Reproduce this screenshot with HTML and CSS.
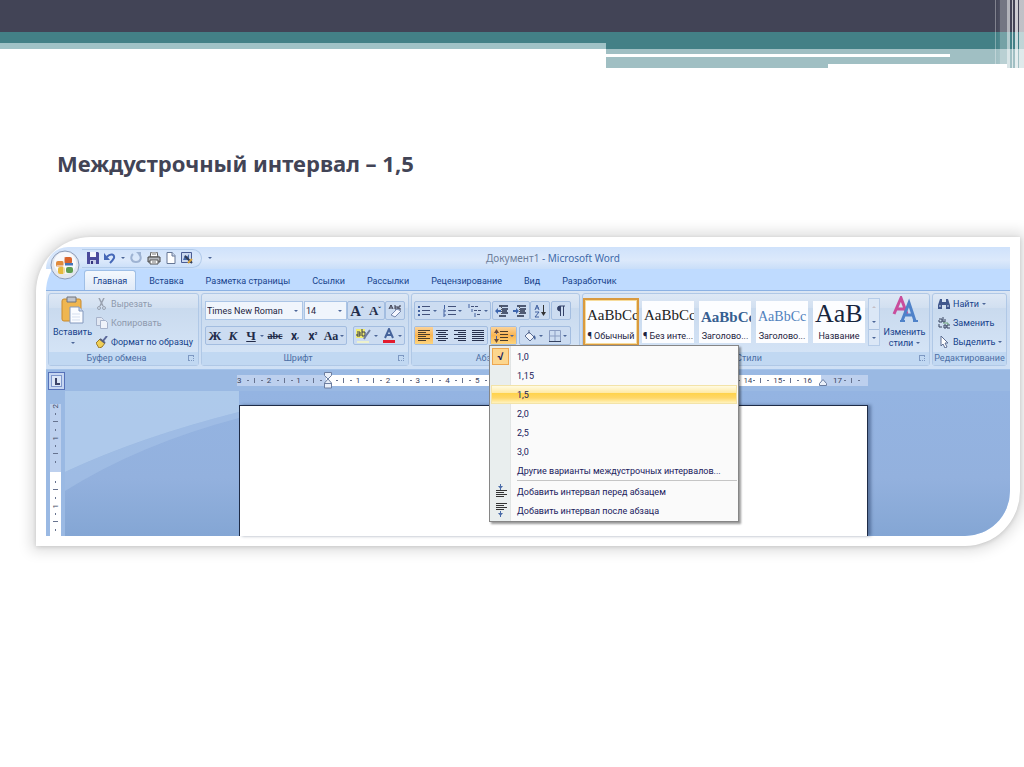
FILE: index.html
```
<!DOCTYPE html>
<html lang="ru">
<head>
  <meta charset="UTF-8" />
  <meta name="viewport" content="width=device-width, initial-scale=1.0" />
  <title>Междустрочный интервал</title>
  <link rel="stylesheet" href="styles.css">
</head>
<body>

  <header class="slide-top">
    <div class="bar-dark"></div>
    <div class="bar-split">
      <div class="split-left"></div>
      <div class="split-right">
        <div class="line-white"></div>
        <div class="line-bottom"></div>
      </div>
    </div>
    <div class="stripes"></div>
  </header>

  <main>
    <h1>Междустрочный интервал – 1,5</h1>

    <div class="frame">
      <div class="word">

        <div class="titlebar">
          <button class="office" aria-label="Office">
            <svg width="30" height="30" viewBox="0 0 30 30">
              <circle cx="15" cy="15" r="14" fill="#e3e7ef" stroke="#8c9cb8"/>
              <circle cx="15" cy="13" r="11" fill="#f8f9fc"/>
              <rect x="6" y="11" width="8" height="6" rx="2" fill="#e08a3c"/>
              <rect x="14" y="7" width="8" height="7" rx="2" fill="#d9642c"/>
              <rect x="8" y="17" width="7" height="7" rx="2" fill="#e7b93d"/>
              <rect x="16" y="17" width="7" height="6" rx="2" fill="#5f9e52"/>
              <path d="M15 13h8v3h-8z" fill="#4574b8"/>
              <path d="M14 8v16M7 16h16" stroke="#f8f9fc"/>
            </svg>
          </button>
          <div class="quick">
            <button aria-label="Сохранить"><svg width="12" height="12" viewBox="0 0 12 12"><path d="M0 0h11l1 1v11H0z" fill="#4a4a9c"/><path d="M3 0h6v5H3z" fill="#f4f6fc"/><path d="M3 8h6v4H3z" fill="#c7cce8"/><path d="M4 9h2v3H4z" fill="#33337d"/></svg></button>
            <button aria-label="Отменить"><svg width="12" height="12" viewBox="0 0 12 12"><path d="M3 5c3-4 8-3 7 1-1 2-2 3-4 5" fill="none" stroke="#4668b8" stroke-width="2"/><path d="M0 1v7h6z" fill="#4668b8"/></svg></button>
            <i class="arrow"></i>
            <button aria-label="Повторить"><svg width="12" height="12" viewBox="0 0 12 12"><path d="M3 2C0 5 1 10 6 10s6-5 3-8" fill="none" stroke="#9eb3d3" stroke-width="2"/><path d="M6 0h5v5z" fill="#9eb3d3"/></svg></button>
            <button aria-label="Печать"><svg width="14" height="13" viewBox="0 0 14 13"><path d="M4 0h6l1 5H3z" fill="#fff" stroke="#555"/><path d="M1 5h12v5H1z" fill="#b5b8bd" stroke="#444"/><path d="M3 8h8v4H3z" fill="#fff" stroke="#555"/><path d="M5 10h4M5 2h4" stroke="#777"/></svg></button>
            <button aria-label="Создать"><svg width="10" height="12" viewBox="0 0 10 12"><path d="M1 0.5h5l3 3v8H1z" fill="#fff" stroke="#667796"/><path d="M6 0v4h3" fill="#cdd8ea" stroke="#667796"/></svg></button>
            <button aria-label="Правка"><svg width="12" height="12" viewBox="0 0 12 12"><path d="M0.5 0.5h10v10H0.5z" fill="#cbd8ef" stroke="#4a5c94"/><path d="M2 8l2-5 2 2 2-3v6z" fill="#4568a8"/><path d="M4 4l7 7" stroke="#333c55" stroke-width="2"/><path d="M7 11l4-4" stroke="#d7a23b" stroke-width="2"/></svg></button>
          </div>
          <i class="arrow quick-more"></i>
          <div class="doc-title"><span>Документ1</span> - Microsoft Word</div>
        </div>

        <nav class="tabs">
          <a href="#" class="active">Главная</a>
          <a href="#">Вставка</a>
          <a href="#">Разметка страницы</a>
          <a href="#">Ссылки</a>
          <a href="#">Рассылки</a>
          <a href="#">Рецензирование</a>
          <a href="#">Вид</a>
          <a href="#">Разработчик</a>
        </nav>

        <div class="ribbon">

          <section class="group clipboard">
            <div class="group-body">
              <button class="big">
                <svg width="24" height="28" viewBox="0 0 24 28"><rect x="1" y="3" width="19" height="22" rx="2" fill="#efb650" stroke="#c98a2d"/><path d="M6 1h9v5H6z" fill="#c0c4cc" stroke="#71757d"/><path d="M9 11h9l4 4v12H9z" fill="#fafcff" stroke="#8499bd"/><path d="M18 11v4h4" fill="#c7d6ec" stroke="#8499bd"/><path d="M11 18h8M11 21h8M11 24h8" stroke="#d5dfef"/></svg>
                Вставить
                <i class="arrow"></i>
              </button>
              <div class="stack">
                <button class="off"><svg width="12" height="12" viewBox="0 0 12 12"><path d="M3 0l4 8M8 0L4 8" stroke="#9aa2b0" stroke-width="1.500"/><circle cx="3" cy="10" r="1.500" fill="none" stroke="#9aa2b0"/><circle cx="8" cy="10" r="1.500" fill="none" stroke="#9aa2b0"/></svg>Вырезать</button>
                <button class="off"><svg width="12" height="12" viewBox="0 0 12 12"><path d="M0.500 0.500h5l2 2v6h-7z" fill="#e1e7f2" stroke="#a7b3cb"/><path d="M4.500 3.500h5l2 2v6h-7z" fill="#eff3fa" stroke="#a7b3cb"/></svg>Копировать</button>
                <button><svg width="12" height="12" viewBox="0 0 12 12"><path d="M11 0L7 5" stroke="#59669a" stroke-width="2"/><path d="M4 3l5 4-3 4-3 1-3-5z" fill="#f0cf55" stroke="#98792c"/><path d="M4 3l5 4" stroke="#575e7c" stroke-width="2"/></svg>Формат по образцу</button>
              </div>
            </div>
            <h2>Буфер обмена<i class="launch"></i></h2>
          </section>

          <section class="group font">
            <div class="rows">
              <div class="row">
                <div class="combos">
                  <label class="combo face"><select aria-label="Шрифт"><option>Times New Roman</option></select><i class="arrow"></i></label>
                  <label class="combo size"><select aria-label="Размер шрифта"><option>14</option></select><i class="arrow"></i></label>
                </div>
                <div class="set"><button class="serif grow">A<sup>ˆ</sup></button><button class="serif shrink">A<sup>ˇ</sup></button></div>
                <div class="set"><button aria-label="Очистить формат"><svg width="14" height="14" viewBox="0 0 14 14"><path d="M1 5l2-4 2 4M2 4h2M7 1v4h3V3H7M13 2h-2v3h2" fill="none" stroke="#334"/><path d="M3 11l6-6 4 2-6 6z" fill="#f5f7ff" stroke="#7788ad"/></svg></button></div>
              </div>
              <div class="row">
                <div class="set styles-set">
                  <button class="serif">Ж</button><button class="serif italic">К</button><button class="serif under">Ч</button><i class="arrow"></i><button class="serif strike">abc</button><button class="script">x<sub>,</sub></button><button class="script">x<sup>²</sup></button><button class="serif case">Aa</button><i class="arrow"></i>
                </div>
                <div class="set">
                  <button class="wide" aria-label="Цвет выделения"><svg width="16" height="16" viewBox="0 0 16 16"><path d="M0 1h9v9H0z" fill="#f1ed6c"/><path d="M1 4h3v4H1V6h3M6 1v7h3V4H6" fill="none" stroke="#363b4f"/><path d="M14 2L9 9l-1 2" stroke="#6e7c9c" stroke-width="2"/><path d="M1 13h12v2H1z" fill="#edf1cc"/></svg><i class="arrow"></i></button>
                  <button class="wide" aria-label="Цвет текста"><svg width="14" height="16" viewBox="0 0 14 16"><path d="M3 10L7 1l4 9M4 7h6" fill="none" stroke="#46639b" stroke-width="2"/><path d="M1 12h12v3H1z" fill="#e31b2d"/></svg><i class="arrow"></i></button>
                </div>
              </div>
            </div>
            <h2>Шрифт<i class="launch"></i></h2>
          </section>

          <section class="group para">
            <div class="rows">
              <div class="row">
                <div class="set">
                  <button class="wide" aria-label="Маркеры"><svg width="13" height="12" viewBox="0 0 13 12"><path d="M4 1.500h8M4 5.500h8M4 9.500h8" stroke="#42517a"/><path d="M0 1h2v2H0zM0 5h2v2H0zM0 9h2v2H0z" fill="#42619f"/></svg><i class="arrow"></i></button>
                  <button class="wide" aria-label="Нумерация"><svg width="13" height="12" viewBox="0 0 13 12"><path d="M5 1.500h8M5 5.500h8M5 9.500h8" stroke="#42517a"/><path d="M1.500 0v4M0 5h2v2H0M0 9h2v2H0" fill="none" stroke="#42619f"/></svg><i class="arrow"></i></button>
                  <button class="wide" aria-label="Многоуровневый список"><svg width="14" height="14" viewBox="0 0 14 14"><path d="M3 2.500h8M6 6.500h7M9 10.500h4" stroke="#42517a" stroke-dasharray="3 1"/><path d="M1 0v4M4 5v3M7 9v4" stroke="#42619f"/></svg><i class="arrow"></i></button>
                </div>
                <div class="set">
                  <button aria-label="Уменьшить отступ"><svg width="13" height="12" viewBox="0 0 13 12"><path d="M4 1h9M7 4h6M7 6h5M7 8h6M4 11h7" stroke="#26304c" stroke-width="1.500"/><path d="M0 6l3-3v2h3v2H3v2z" fill="#3e66ae"/><path d="M6.500 0v12" stroke="#555" stroke-dasharray="1 1"/></svg></button>
                  <button aria-label="Увеличить отступ"><svg width="13" height="12" viewBox="0 0 13 12"><path d="M4 1h9M7 4h6M7 6h5M7 8h6M4 11h7" stroke="#26304c" stroke-width="1.500"/><path d="M6 6L3 3v2H0v2h3v2z" fill="#3e66ae"/><path d="M6.500 0v12" stroke="#555" stroke-dasharray="1 1"/></svg></button>
                </div>
                <div class="set"><button aria-label="Сортировка"><svg width="13" height="14" viewBox="0 0 13 14"><path d="M1 6l2-5 2 5M2 4h3M1 8h4l-4 5h4" fill="none" stroke="#42619f"/><path d="M9.500 1v9" stroke="#333"/><path d="M7 8h5l-2.500 4z" fill="#333"/></svg></button></div>
                <div class="set"><button aria-label="Знаки абзаца"><svg width="9" height="12" viewBox="0 0 9 12"><path d="M4 1a2.500 2.500 0 000 5z" fill="#354268" stroke="#354268"/><path d="M4.500 1v10M7.500 1v10M4 1h5" stroke="#354268"/></svg></button></div>
              </div>
              <div class="row">
                <div class="set">
                  <button class="hot" aria-label="По левому краю"><svg width="12" height="12" viewBox="0 0 12 12"><path d="M0 .5h12M0 2.500h8M0 4.500h12M0 6.500h8M0 8.500h12M0 10.500h8" stroke="#4a3d2a"/></svg></button>
                  <button aria-label="По центру"><svg width="12" height="12" viewBox="0 0 12 12"><path d="M0 .5h12M2 2.500h8M0 4.500h12M2 6.500h8M0 8.500h12M2 10.500h8" stroke="#26304c"/></svg></button>
                  <button aria-label="По правому краю"><svg width="12" height="12" viewBox="0 0 12 12"><path d="M0 .5h12M4 2.500h8M0 4.500h12M4 6.500h8M0 8.500h12M4 10.500h8" stroke="#26304c"/></svg></button>
                  <button aria-label="По ширине"><svg width="12" height="12" viewBox="0 0 12 12"><path d="M0 .5h12M0 2.500h12M0 4.500h12M0 6.500h12M0 8.500h12M0 10.500h12" stroke="#26304c"/></svg></button>
                </div>
                <div class="set spacing">
                  <button class="hot wide" aria-label="Междустрочный интервал"><svg width="14" height="14" viewBox="0 0 14 14"><path d="M6 2.500h8M6 5.500h8M6 8.500h8M6 11.500h8" stroke="#4a3d2a"/><path d="M2.500 2v10" stroke="#4a5fa0" stroke-dasharray="3 2"/><path d="M0 4l2.500-4L5 4zM0 10l2.500 4L5 10z" fill="#6b4a3a"/></svg><i class="arrow"></i></button>

                  <!-- line spacing menu -->
                  <ul class="menu">
                    <li><button><span class="check">√</span>1,0</button></li>
                    <li><button>1,15</button></li>
                    <li><button class="hover">1,5</button></li>
                    <li><button>2,0</button></li>
                    <li><button>2,5</button></li>
                    <li><button>3,0</button></li>
                    <li><button>Другие варианты междустрочных интервалов...</button></li>
                    <li class="sep"></li>
                    <li><button><svg class="mark" width="12" height="14" viewBox="0 0 12 14"><path d="M5.500 0v6" stroke="#4a6ba8"/><path d="M3 2h5L5.500 5z" fill="#4a6ba8"/><path d="M1 6.500h11M1 8.500h8M1 10.500h11M1 12.500h8" stroke="#333"/></svg><u>Д</u>обавить интервал перед абзацем</button></li>
                    <li><button><svg class="mark" width="12" height="14" viewBox="0 0 12 14"><path d="M1 .5h11M1 2.500h8M1 4.500h11M1 6.500h8" stroke="#333"/><path d="M5.500 8v6" stroke="#4a6ba8"/><path d="M3 10h5l-2.500 3z" fill="#4a6ba8"/></svg><u>Д</u>обавить интервал после абзаца</button></li>
                  </ul>
                </div>
                <div class="set">
                  <button class="wide" aria-label="Заливка"><svg width="14" height="14" viewBox="0 0 14 14"><path d="M2 7l4-4 5 5-4 4z" fill="#f2f5fb" stroke="#5b6d94"/><path d="M6 5V1" stroke="#5b6d94"/><path d="M11 6c2 2 2 3 1 5-1-1-2-3-1-5z" fill="#47649c"/></svg><i class="arrow"></i></button>
                  <button class="wide" aria-label="Границы"><svg width="12" height="12" viewBox="0 0 12 12"><path d="M0.500 0.500h11v11H0.500zM6 0v12M0 6h12" fill="none" stroke="#8a9dc2"/><path d="M0 11.500h12" stroke="#34415f"/></svg><i class="arrow"></i></button>
                </div>
              </div>
            </div>
            <h2>Абзац<i class="launch"></i></h2>
          </section>

          <section class="group styles">
            <div class="group-body">
              <div class="gallery">
                <button class="card selected"><span class="sample">AaBbCc</span><span>¶ Обычный</span></button>
                <button class="card"><span class="sample">AaBbCc</span><span>¶ Без инте...</span></button>
                <button class="card"><span class="sample head1">AaBbCc</span><span>Заголово...</span></button>
                <button class="card"><span class="sample head2">AaBbCc</span><span>Заголово...</span></button>
                <button class="card"><span class="sample title">AaB</span><span>Название</span></button>
                <div class="scroller">
                  <button aria-label="Вверх"><i class="arrow up"></i></button>
                  <button aria-label="Вниз"><i class="arrow"></i></button>
                  <button class="more" aria-label="Дополнительно"><i class="arrow"></i></button>
                </div>
              </div>
              <button class="big change">
                <svg width="26" height="28" viewBox="0 0 26 28"><path d="M2 18L9 2l6 16M5 13h8" fill="none" stroke="#c84d9c" stroke-width="3"/><path d="M10 25l7-18 6 18M13 19h9" fill="none" stroke="#4f82c9" stroke-width="3"/><path d="M8 25h5M21 25h5" stroke="#4f82c9" stroke-width="2"/></svg>
                Изменить
                <span>стили<i class="arrow"></i></span>
              </button>
            </div>
            <h2>Стили<i class="launch"></i></h2>
          </section>

          <section class="group edit">
            <div class="group-body">
              <div class="stack">
                <button><svg width="12" height="12" viewBox="0 0 12 12"><path d="M2 1h2v3h4V1h2l2 6v4H8V7H4v4H0V7z" fill="#3f568c"/><path d="M1 8h2M9 8h2" stroke="#d6e2f6"/></svg>Найти<i class="arrow"></i></button>
                <button><svg width="12" height="12" viewBox="0 0 12 12"><path d="M1 2h3v3H1V3M5 0v5h2V2M1 7v3h3M6 8h2v3H6zM12 8H9v3h3" fill="none" stroke="#36435e"/><path d="M5 6h5v2" fill="none" stroke="#66a074"/></svg>Заменить</button>
                <button><svg width="12" height="12" viewBox="0 0 12 12"><path d="M3 0l7 7H7l2 4-2 1-2-4-2 2z" fill="#fff" stroke="#5d6e93"/></svg>Выделить<i class="arrow"></i></button>
              </div>
            </div>
            <h2>Редактирование</h2>
          </section>

        </div>

        <div class="ruler-bar">
          <button class="tab-stop" aria-label="Позиция табуляции"></button>
          <div class="ruler">
            <div class="zone left-zone"><span>3</span><span>2</span><span>1</span></div>
            <div class="zone mid-zone">
              <svg class="indent" width="10" height="17" viewBox="0 0 10 17"><path d="M1.500 0.500h7v3L5 7 1.500 3.500zM5 7l3.500 4v5h-7v-5zM1.500 11.500h7" fill="#e9eff9" stroke="#6c7d9f"/></svg>
              <span></span><span>1</span><span>2</span><span>3</span><span>4</span><span>5</span><span>6</span><span>7</span><span>8</span><span>9</span><span>10</span><span>11</span><span>12</span><span>13</span><span>14</span><span>15</span><span class="last">16</span>
            </div>
            <div class="zone right-zone">
              <svg class="indent" width="10" height="17" viewBox="0 0 10 17"><path d="M5 7.500l3.500 4v2h-7v-2z" fill="#e9eff9" stroke="#6c7d9f"/></svg>
              <span></span><span>17</span>
            </div>
          </div>
        </div>

        <div class="workspace">
          <div class="side-ruler">
            <div class="side-top"><span>2</span><span>1</span></div>
            <div class="side-bottom"><span></span><span>1</span></div>
          </div>
          <svg class="wave" viewBox="0 0 174 145" preserveAspectRatio="none">
            <path d="M0 0H174V21Q75 46 0 81z" fill="#b9d3f0" fill-opacity="0.7"/>
            <path d="M0 81Q75 46 174 21V27Q75 53 0 100z" fill="#a9c5ea" fill-opacity="0.5"/>
          </svg>
          <div class="page"></div>
        </div>

      </div>
    </div>
  </main>

</body>
</html>
```
FILE: styles.css
```
* {
  box-sizing: border-box;
}

body {
  margin: 0;
  background: #fff;
  font-family: "Noto Sans", sans-serif;
}

main {
  padding-bottom: 40px;
}

button,
select {
  font: inherit;
  color: inherit;
  margin: 0;
  padding: 0;
  border: 0;
  background: none;
}

button {
  white-space: nowrap;
}

svg {
  display: block;
  flex: none;
}

/* slide decoration */
.slide-top {
  position: relative;
  height: 68px;
}

.bar-dark {
  height: 32px;
  background: #424456;
}

.bar-split {
  display: flex;
  height: 36px;
}

.split-left {
  width: 59.2%;
  background: linear-gradient(#438086 11px, #a0c2c6 11px, #a0c2c6 17px, #fff 17px);
}

.split-right {
  flex: 1;
  display: flex;
  flex-direction: column;
  justify-content: flex-end;
  background: linear-gradient(#438086 17px, #a0bfc3 17px);
}

.line-white {
  height: 3px;
  width: 82.4%;
  margin-bottom: 7px;
  background: #fff;
}

.line-bottom {
  height: 4px;
  margin: 0 17px 0 53%;
  background: #fff;
}

.stripes {
  position: absolute;
  top: 0;
  right: 0;
  width: 30px;
  height: 68px;
  background: linear-gradient(90deg,
    transparent 1px, #fff5 1px, #fff5 2px, transparent 2px, #fff1 6px,
    #fff4 6px, #fff4 13px, #fff9 13px, #fff9 16px, #fff0 16px, #fff0 18px,
    #fffa 18px, #fffa 19px, #fff0 19px, #fff0 21px, #fffb 21px, #fffb 24px,
    #fff0 24px, #fff0 25px, #fffa 25px);
}

/* heading */
h1 {
  margin: 80px 57px 58px;
  font-size: 22px;
  line-height: 31px;
  font-weight: bold;
  color: #424456;
}

/* picture frame */
.frame {
  margin: 0 4px 0 36px;
  padding: 10px;
  background: #fff;
  border-radius: 55px 0 55px 0;
  box-shadow: 0 0 14px 5px #0002, 0 1px 4px #0002;
}

.word {
  position: relative;
  border-radius: 45px 0 45px 0;
  background: #bfdbff;
  font-family: Roboto, sans-serif;
  font-size: 9px;
  line-height: 12px;
  color: #15428b;
}

.arrow {
  flex: none;
  width: 0;
  height: 0;
  border: 2px solid transparent;
  border-top-color: #4c6698;
  border-bottom: 0;
}

.arrow.up {
  border-top: 0;
  border-bottom: 2px solid #c6bfc6;
}

/* title bar */
.titlebar {
  display: flex;
  align-items: center;
  height: 22px;
  padding-left: 36px;
  border-radius: 45px 0 0 0;
  background: linear-gradient(#cfe2fb, #dce9fb 60%, #c9def9);
}

.office {
  position: absolute;
  left: 4px;
  top: 3px;
}

.quick {
  display: flex;
  align-items: center;
  gap: 5px;
  height: 19px;
  padding: 0 8px 0 5px;
  border: 1px solid #b2cbea;
  border-left: 0;
  border-radius: 0 10px 10px 0;
}

.quick-more {
  margin-left: 6px;
}

.doc-title {
  flex: 1;
  padding-right: 116px;
  text-align: center;
  font-family: "Noto Sans", sans-serif;
  font-size: 10px;
  color: #3e6aaa;
}

.doc-title span {
  color: #6d7f9b;
}

/* tabs */
.tabs {
  display: flex;
  align-items: flex-end;
  height: 21px;
  padding-left: 38px;
}

.tabs a {
  padding: 4px 10px 3px;
  border: 1px solid transparent;
  border-bottom: 0;
  color: #15428b;
  text-decoration: none;
}

.tabs .active {
  padding: 4px 8px 3px;
  margin-right: 2px;
  border-color: #9fbfe6;
  border-radius: 3px 3px 0 0;
  background: linear-gradient(#f4f8fd, #dfeaf8);
}

/* ribbon */
.ribbon {
  display: flex;
  gap: 2px;
  height: 80px;
  padding: 2px 3px 3px 2px;
  border-top: 1px solid #8db2e3;
  border-bottom: 1px solid #a4c3ea;
  background: linear-gradient(#dbe6f4, #c9daf0 20%, #cfe0f5);
}

.group {
  display: flex;
  flex: none;
  flex-direction: column;
  border: 1px solid #b0c8e6;
  border-radius: 3px;
  background: linear-gradient(#dee8f5, #d1dff0 20%, #c9daee 20%, #d7e6f8);
}

.group h2 {
  position: relative;
  margin: 0;
  padding-right: 14px;
  height: 13px;
  font-size: 9px;
  line-height: 13px;
  font-weight: normal;
  text-align: center;
  color: #4c6fa5;
  background: #c1d8f2;
}

.group.edit h2 {
  padding: 0;
}

.launch {
  position: absolute;
  right: 4px;
  top: 3px;
  width: 6px;
  height: 6px;
  border: 1px solid #7d98c2;
  border-right-style: dotted;
  border-bottom-style: dotted;
}

.clipboard {
  width: 151px;
}

.font {
  width: 208px;
}

.para {
  width: 169px;
}

.group.styles {
  flex: 1;
  min-width: 0;
}

.edit {
  width: 75px;
}

.group-body {
  display: flex;
  flex: 1;
}

.big {
  display: flex;
  flex-direction: column;
  align-items: center;
  padding: 2px 4px 0;
  line-height: 11px;
}

.big svg {
  margin-bottom: 3px;
}

.big .arrow {
  margin-top: 4px;
}

.big span .arrow {
  display: inline-block;
  margin: 0 0 2px 3px;
}

.big.change {
  flex: 1;
  padding: 2px 0 0;
}

.stack {
  display: flex;
  flex-direction: column;
}

.stack button {
  display: flex;
  align-items: center;
  gap: 3px;
  height: 19px;
}

.stack .off {
  color: #8d99ad;
}

.edit .stack {
  padding-left: 5px;
}

.rows {
  display: flex;
  flex-direction: column;
  flex: 1;
  gap: 6px;
  padding: 7px 3px 0;
}

.row {
  display: flex;
  justify-content: space-between;
  height: 19px;
}

.para .rows {
  padding: 7px 8px 0 2px;
}

.combos {
  display: flex;
  gap: 1px;
}

.combo {
  display: flex;
  align-items: center;
  padding: 0 4px 0 1px;
  border: 1px solid #abc5e6;
  background: #f0f5fc;
}

.combo select {
  flex: 1;
  min-width: 0;
  appearance: none;
  color: #1d2440;
}

.face {
  width: 98px;
}

.size {
  width: 43px;
}

.set {
  display: flex;
  align-items: center;
  border: 1px solid #a3bde0;
  border-radius: 2px;
  background: #ccdcf1;
}

.set button {
  display: flex;
  align-items: center;
  justify-content: center;
  width: 18px;
  height: 17px;
  color: #222c4a;
}

.set button.wide {
  width: 25px;
  gap: 2px;
}

.serif {
  font-family: "Liberation Serif", serif;
  font-size: 13px;
  font-weight: bold;
}

.set .grow {
  font-size: 15px;
}

.serif sup,
.script sup,
.script sub {
  font-size: 8px;
  line-height: 8px;
}

.styles-set {
  width: 142px;
}

.styles-set .italic {
  font-style: italic;
}

.styles-set .under {
  text-decoration: underline;
}

.styles-set .strike {
  width: 22px;
  font-size: 10px;
  text-decoration: line-through;
}

.script {
  font-size: 12px;
  font-weight: bold;
}

.styles-set .case {
  font-size: 12px;
}

.set .hot {
  background: linear-gradient(#fbd39a, #f9b551 50%, #fdd57e);
}

/* line spacing menu */
.spacing {
  position: relative;
}

.menu {
  position: absolute;
  left: -2px;
  top: 18px;
  z-index: 5;
  width: 250px;
  margin: 0;
  padding: 1px;
  list-style: none;
  border: 1px solid #868686;
  background: linear-gradient(90deg, #e9eeee 20px, #c9cfcf 20px, #fafafa 21px);
  box-shadow: 2px 2px 2px #0006;
}

.menu button {
  position: relative;
  display: block;
  width: 100%;
  height: 19px;
  padding-left: 26px;
  text-align: left;
  color: #20205c;
}

.menu .hover {
  border: 1px solid #f3e3a8;
  padding-left: 25px;
  background: linear-gradient(#fffbe2, #ffeaa6 40%, #ffd249 40%, #ffd768 70%, #fff3be);
}

.check {
  position: absolute;
  left: 1px;
  top: 1px;
  width: 17px;
  height: 17px;
  border: 1px solid #eda650;
  background: #fcd68e;
  text-align: center;
  font-size: 11px;
  line-height: 15px;
  font-weight: bold;
}

.mark {
  position: absolute;
  left: 4px;
  top: 2px;
}

.sep {
  height: 2px;
  margin-left: 26px;
  border-top: 1px solid #c5c5c5;
}

/* styles gallery */
.gallery {
  display: flex;
  gap: 5px;
  height: 48px;
  margin-top: 4px;
}

.card {
  width: 52px;
  height: 42px;
  margin-top: 3px;
  overflow: hidden;
  background: #fcfdff;
  color: #1c2340;
}

.card span {
  display: block;
}

.card.selected {
  width: 56px;
  height: 48px;
  margin: 0;
  margin-right: -2px;
  border: 2px solid #d99a3f;
  box-shadow: inset 0 0 0 1px #f7dc9c;
}

.card .sample {
  height: 28px;
  padding: 0 2px;
  overflow: hidden;
  font-family: "Liberation Serif", serif;
  font-size: 15px;
  line-height: 26px;
  text-align: left;
  color: #222;
}

.card .head1 {
  font-weight: bold;
  line-height: 30px;
  color: #365f91;
}

.card .head2 {
  font-size: 14px;
  line-height: 30px;
  color: #4f81bd;
}

.card .title {
  font-size: 26px;
  line-height: 24px;
  color: #17253d;
}

.scroller {
  display: flex;
  flex-direction: column;
  width: 12px;
  margin-left: -2px;
  border: 1px solid #b6cce8;
}

.scroller button {
  display: flex;
  flex: 1;
  align-items: center;
  justify-content: center;
  background: #dbe7f6;
}

.scroller .more {
  border-top: 1px solid #a9c0df;
}

/* rulers */
.ruler-bar {
  display: flex;
  align-items: center;
  height: 21px;
  padding: 0 142px 0 2px;
  background: #9ab9e3;
}

.tab-stop {
  width: 17px;
  height: 18px;
  border: 1px solid #5571b8;
  background:
    linear-gradient(#3c4468, #3c4468) 6px 5px / 2px 6px no-repeat,
    linear-gradient(#3c4468, #3c4468) 6px 10px / 5px 2px no-repeat,
    #dce7f8;
  box-shadow: inset 0 0 0 2px #c6d6f1, inset 0 0 0 3px #8098cc;
}

.ruler {
  display: flex;
  flex: 1;
  height: 11px;
  margin-left: 172px;
  font-size: 8px;
  line-height: 11px;
  color: #3b4460;
}

.zone {
  position: relative;
  display: flex;
  background: #bdd0ee;
}

.zone span {
  flex: 1;
  background:
    linear-gradient(#67738f, #67738f) 10px 5px / 2px 1px no-repeat,
    linear-gradient(#67738f, #67738f) 17px 3px / 1px 5px no-repeat,
    linear-gradient(#67738f, #67738f) 24px 5px / 2px 1px no-repeat;
}

.left-zone {
  width: 89px;
}

.mid-zone {
  flex: 1;
  background: #fff;
}

.mid-zone .last {
  flex: none;
  width: 18px;
  background: none;
}

.right-zone {
  width: 47px;
}

.right-zone span:nth-of-type(1) {
  flex: none;
  width: 12px;
  background: none;
}

.right-zone span:nth-of-type(2) {
  background-position: 11px 5px, 18px 3px, 25px 5px;
}

.indent {
  position: absolute;
  left: -3px;
  top: -3px;
}

/* document area */
.workspace {
  display: flex;
  height: 145px;
  padding-right: 142px;
  border-radius: 0 0 45px 0;
  background: linear-gradient(#94b4e2, #93b1de 60%, #84a6d4);
}

.side-ruler {
  width: 19px;
  padding: 13px 4px 0;
  background: #9ab9e3;
}

.side-top,
.side-bottom {
  display: flex;
  flex-direction: column;
  height: 68px;
  font-size: 8px;
  line-height: 11px;
  color: #3b4460;
  background: #bdd0ee;
}

.side-top span,
.side-bottom span {
  height: 32px;
  writing-mode: sideways-lr;
  text-align: right;
  background:
    linear-gradient(#67738f, #67738f) 5px 9px / 1px 2px no-repeat,
    linear-gradient(#67738f, #67738f) 3px 17px / 5px 1px no-repeat,
    linear-gradient(#67738f, #67738f) 5px 25px / 1px 2px no-repeat;
}

.side-bottom {
  height: 64px;
  background: #fff;
}

.wave {
  width: 174px;
  height: 145px;
}

.page {
  flex: 1;
  margin-top: 14px;
  border: 1px solid #1f2c47;
  border-bottom: 0;
  background: #fff;
  box-shadow: 3px 0 3px #0f234866;
}
```
